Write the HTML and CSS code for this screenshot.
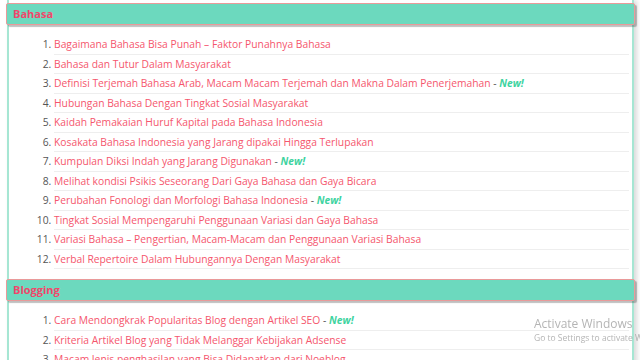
FILE: index.html
```html
<!DOCTYPE html>
<html lang="en">
<head>
    <meta charset="UTF-8">
    <meta name="viewport" content="width=device-width, initial-scale=1.0">
    <title>Daftar Isi</title>
    <link rel="stylesheet" href="styles.css">
</head>
<body>
    <div class="wrap">
        <div class="section">
            <div class="section-title">Bahasa</div>
            <ol class="post-list">
                <li><a href="#">Bagaimana Bahasa Bisa Punah – Faktor Punahnya Bahasa</a></li>
                <li><a href="#">Bahasa dan Tutur Dalam Masyarakat</a></li>
                <li><a href="#">Definisi Terjemah Bahasa Arab, Macam Macam Terjemah dan Makna Dalam Penerjemahan</a> - <span class="new">New!</span></li>
                <li><a href="#">Hubungan Bahasa Dengan Tingkat Sosial Masyarakat</a></li>
                <li><a href="#">Kaidah Pemakaian Huruf Kapital pada Bahasa Indonesia</a></li>
                <li><a href="#">Kosakata Bahasa Indonesia yang Jarang dipakai Hingga Terlupakan</a></li>
                <li><a href="#">Kumpulan Diksi Indah yang Jarang Digunakan</a> - <span class="new">New!</span></li>
                <li><a href="#">Melihat kondisi Psikis Seseorang Dari Gaya Bahasa dan Gaya Bicara</a></li>
                <li><a href="#">Perubahan Fonologi dan Morfologi Bahasa Indonesia</a> - <span class="new">New!</span></li>
                <li><a href="#">Tingkat Sosial Mempengaruhi Penggunaan Variasi dan Gaya Bahasa</a></li>
                <li><a href="#">Variasi Bahasa – Pengertian, Macam-Macam dan Penggunaan Variasi Bahasa</a></li>
                <li><a href="#">Verbal Repertoire Dalam Hubungannya Dengan Masyarakat</a></li>
            </ol>
        </div>
        <div class="section">
            <div class="section-title">Blogging</div>
            <ol class="post-list">
                <li><a href="#">Cara Mendongkrak Popularitas Blog dengan Artikel SEO</a> - <span class="new">New!</span></li>
                <li><a href="#">Kriteria Artikel Blog yang Tidak Melanggar Kebijakan Adsense</a></li>
                <li><a href="#">Macam Jenis penghasilan yang Bisa Didapatkan dari Noeblog</a></li>
            </ol>
        </div>
    </div>

    <div class="activate">
        <div class="activate-title">Activate Windows</div>
        <div class="activate-sub">Go to Settings to activate Windows.</div>
    </div>
</body>
</html>
```

FILE: styles.css
```css
body {
    margin: 0;
    background-color: #ffffff;
    font-family: 'Open Sans', 'Noto Sans', sans-serif;
    font-size: 10.3px;
    overflow: hidden;
}
.wrap {
    margin: 0 6px 0 7px;
    padding-top: 3px;
    border-left: 2px solid #a6e6d3;
    border-right: 2px solid #a6e6d3;
    box-shadow: 3px 0 5px rgba(0, 0, 0, 0.15);
    min-height: 400px;
}
.section-title {
    margin: 0 -3px;
    height: 20px;
    line-height: 20px;
    padding: 0 6px;
    background-color: #6cd9be;
    border: 1px solid #e99a9a;
    border-radius: 2px;
    box-shadow: 2px 2px 1px rgba(0, 0, 0, 0.25);
    color: #f2466a;
    font-weight: 700;
    font-size: 11px;
}
.post-list {
    margin: 10px 3px 10px 0;
    padding-left: 45px;
    color: #555;
}
.post-list li {
    line-height: 14.5px;
    padding: 2px 0 2px 0;
    border-bottom: 1px solid #eeeeee;
}
.post-list a {
    color: #f5566d;
    text-decoration: none;
}
.new {
    color: #3dd3a0;
    font-weight: 700;
    font-style: italic;
}
.activate {
    position: fixed;
    left: 534px;
    top: 316px;
    color: rgba(130, 130, 130, 0.6);
    font-family: 'Open Sans', sans-serif;
    white-space: nowrap;
}
.activate-title {
    font-size: 12px;
    line-height: 16px;
}
.activate-sub {
    font-size: 8.5px;
    line-height: 12px;
}
```
